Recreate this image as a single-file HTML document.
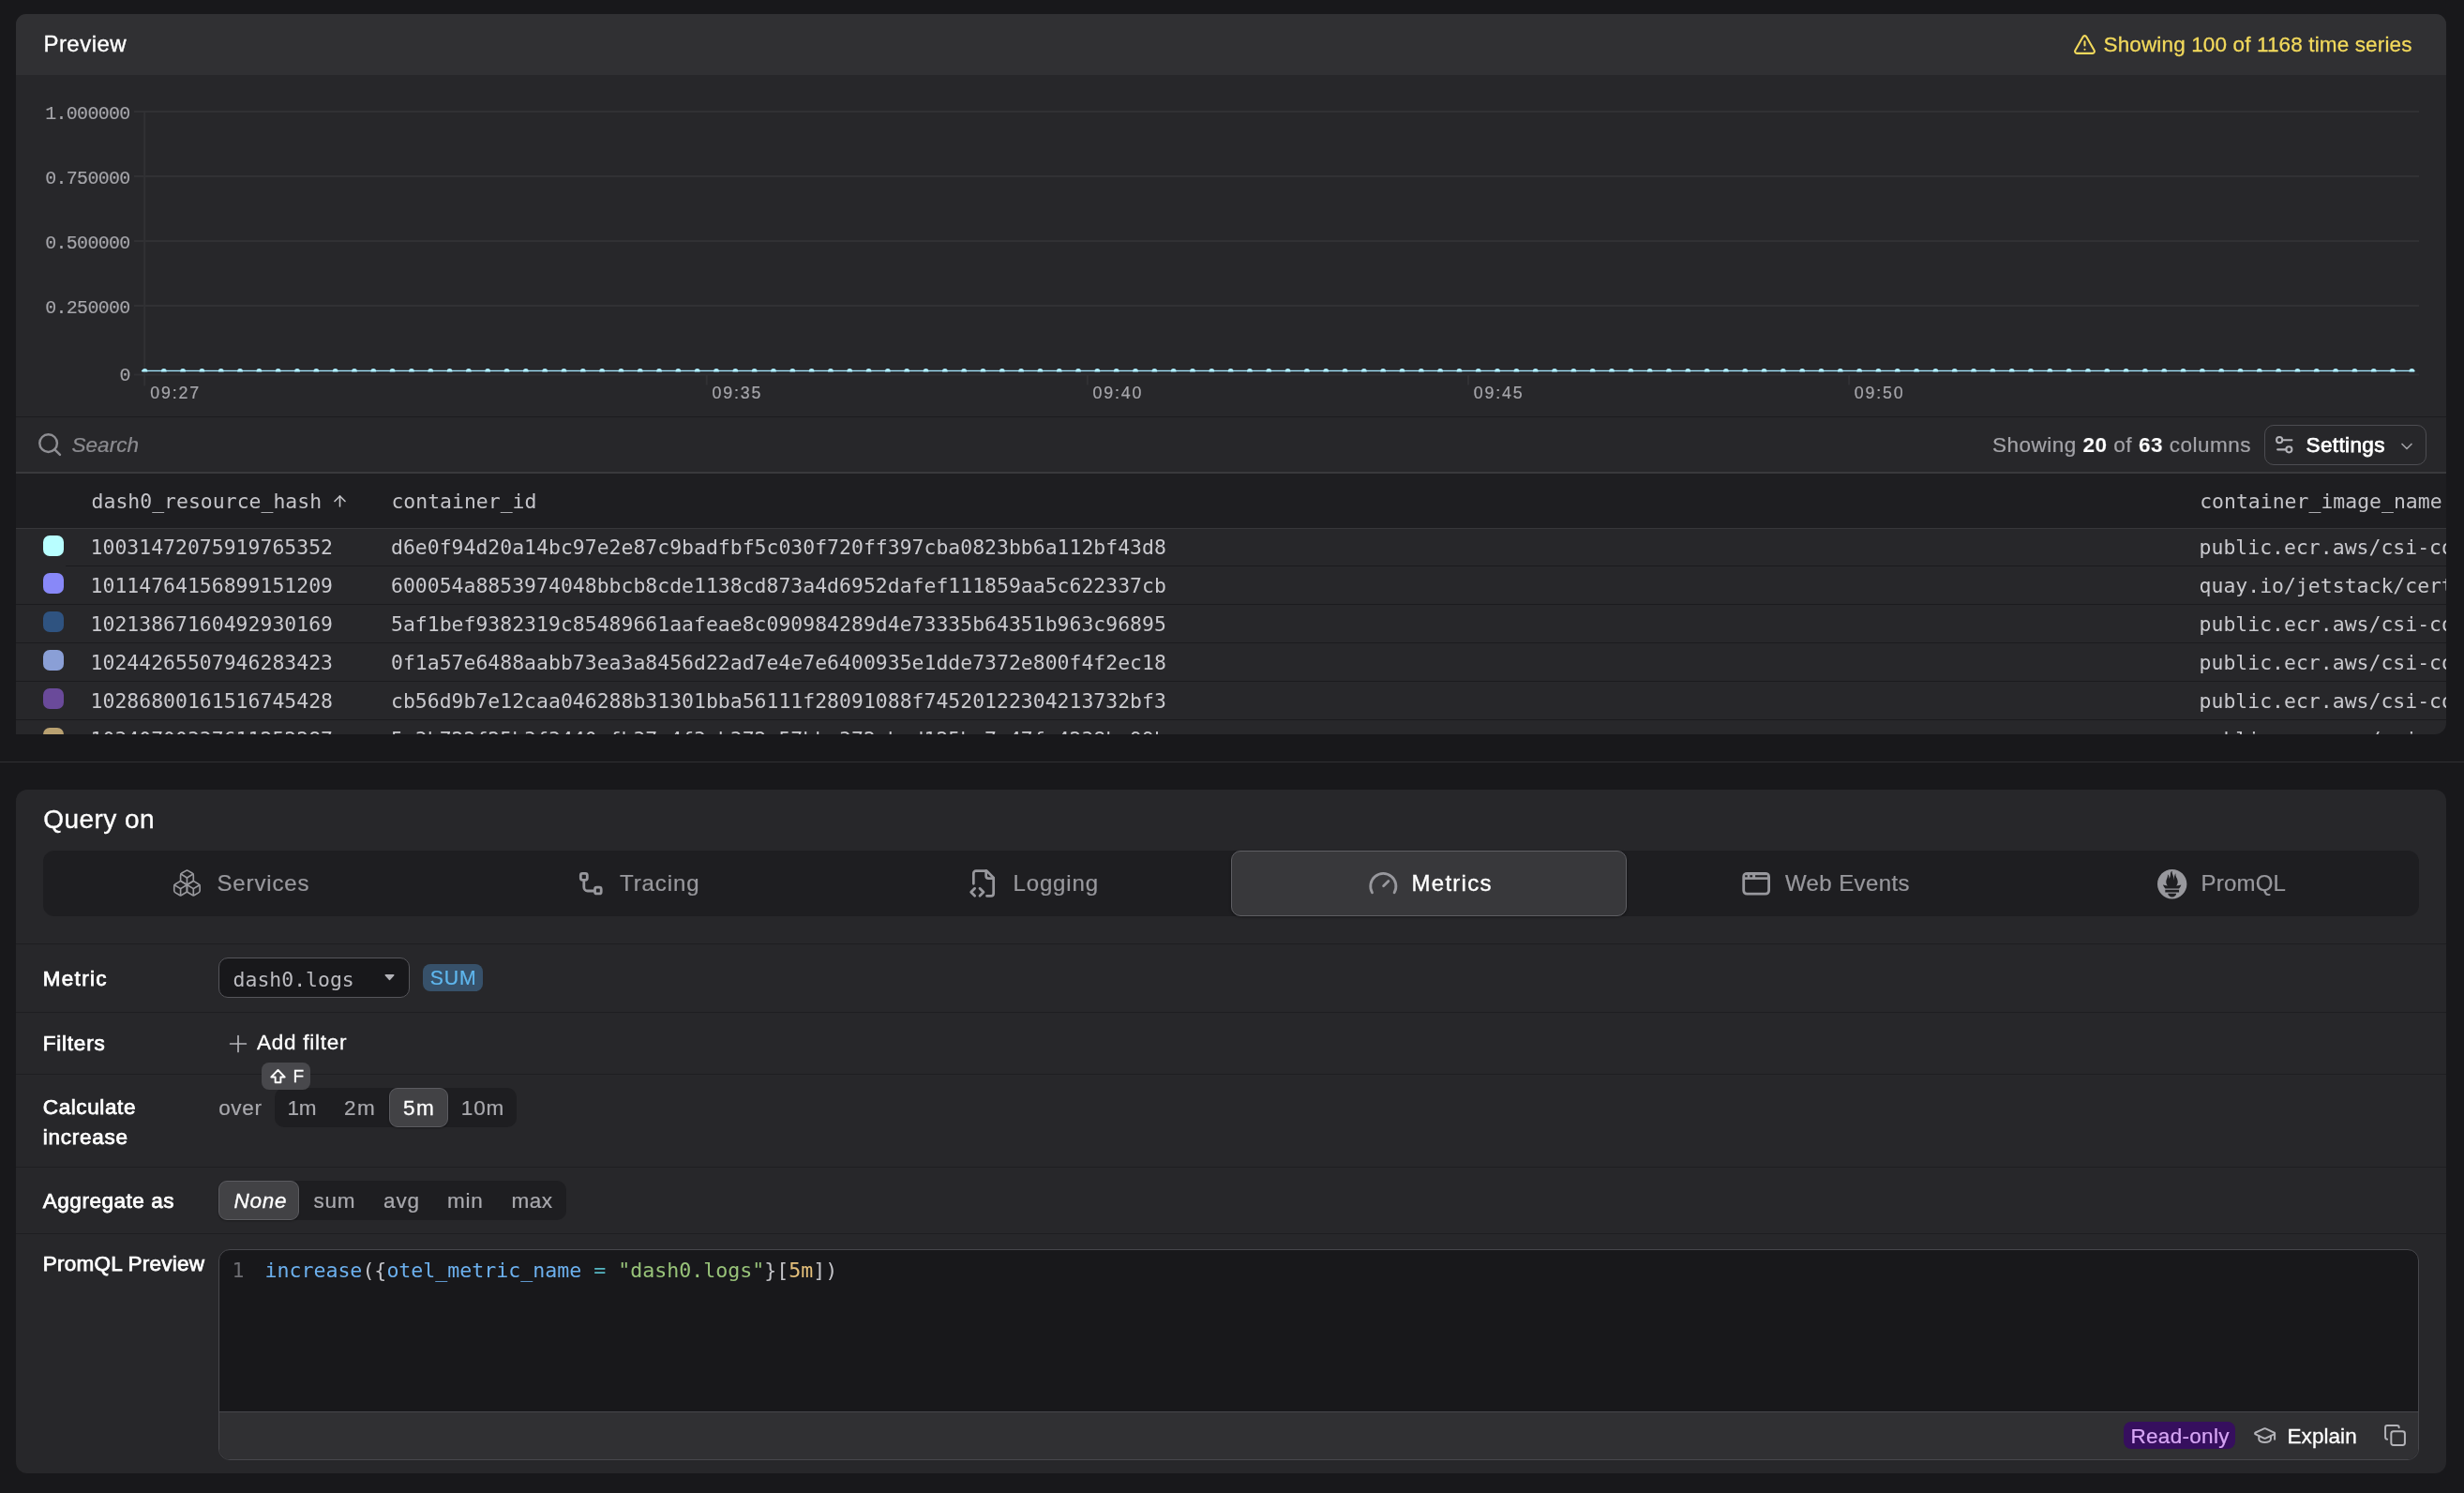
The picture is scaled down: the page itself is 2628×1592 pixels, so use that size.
<!DOCTYPE html>
<html lang="en"><head><meta charset="utf-8"><title>Preview</title>
<style>
html,body{margin:0;padding:0;}
body{width:2628px;height:1592px;background:#18181b;position:relative;overflow:hidden;font-family:"Liberation Sans",Arial,sans-serif;}
.a{position:absolute;box-sizing:border-box;}
.t{position:absolute;white-space:nowrap;line-height:1;margin:0;padding:0;}
.t b{color:#fff;font-weight:700;}
.sans{font-family:"Liberation Sans",Arial,sans-serif;}
.mono{font-family:"DejaVu Sans Mono","Liberation Mono",monospace;}
.lmono{font-family:"Liberation Mono","DejaVu Sans Mono",monospace;}
#app{position:absolute;left:0;top:0;width:2628px;height:1592px;overflow:hidden;will-change:transform;}
svg{position:absolute;overflow:visible;}
.ic{fill:none;stroke-linecap:round;stroke-linejoin:round;}
.card{background:#27272a;}
.sep{left:17px;width:2592px;height:1px;background:#1e1e21;}
.rowb{left:17px;width:2592px;height:1px;background:#1b1b1e;}
.sw{width:22.3px;height:22px;border-radius:7px;}
.seg{background:#1e1e21;border-radius:10px;}
.segon{background:#424245;border:1px solid #5b5b60;border-radius:9px;box-shadow:0 1px 2px rgba(0,0,0,.35);}

</style></head>
<body>
<div id="app">
<!-- ===== Preview card ===== -->
<div class="a card" style="left:17px;top:15px;width:2592px;height:768px;border-radius:11px 11px 12px 0;"></div>
<div class="a" style="left:17px;top:15px;width:2592px;height:65px;background:#303033;border-radius:11px 11px 0 0;"></div>
<svg class="ic" style="left:2211px;top:34.800px;" width="25" height="25" viewBox="0 0 24 24" stroke="#f2d95c" stroke-width="2"><path d="m21.73 18-8-14a2 2 0 0 0-3.48 0l-8 14A2 2 0 0 0 4 21h16a2 2 0 0 0 1.73-3"/><path d="M12 9v4"/><path d="M12 17h.01"/></svg>

<!-- chart -->
<svg style="left:0;top:0;" width="2628" height="460" viewBox="0 0 2628 460">
  <g stroke="#313134" stroke-width="2" fill="none">
    <path d="M143 119H2580M143 188H2580M143 257H2580M143 326H2580"/>
    <path d="M143 399.500H2580" stroke="#2f2f32"/>
    <path d="M154.200 120V411.500M753.800 400V410.500M1159.900 400V410.500M1566 400V410.500M1972.100 400V410.500"/>
  </g>
  <svg x="150" y="380" width="2430" height="16.500" viewBox="150 380 2430 16.500" style="overflow:hidden;">
    <path d="M150.900 396H2575.500" stroke="#1a1a1d" stroke-width="3" fill="none"/>
    <path d="M150.900 395.500H2575.500" stroke="#a6e7fe" stroke-width="1.600" fill="none"/>
    <path d="M154.450 395.800H2572.800" stroke="#aeeeff" stroke-width="5.800" stroke-linecap="round" stroke-dasharray="0.01 20.3085" fill="none"/>
  </svg>
</svg>
<div class="a" style="left:17px;top:444px;width:2592px;height:1px;background:#1b1b1e;"></div>

<!-- search / toolbar -->
<svg class="ic" style="left:39.4px;top:460.4px;" width="28" height="28" viewBox="0 0 24 24" stroke="#8e8e93" stroke-width="2.100"><circle cx="10.800" cy="10.800" r="8"/><path d="m21.4 21.4-4.8-4.8"/></svg>
<div class="a" style="left:2415px;top:453px;width:173px;height:42.5px;border:1px solid #4d4d52;border-radius:10px;"></div>
<svg class="ic" style="left:2423.500px;top:462.300px;" width="24.500" height="24.500" viewBox="0 0 24 24" stroke="#b4b4b9" stroke-width="2"><path d="M20 7h-9"/><path d="M14 17H5"/><circle cx="17" cy="17" r="3"/><circle cx="7" cy="7" r="3"/></svg>
<svg class="ic" style="left:2556.6px;top:465.5px;" width="20" height="20" viewBox="0 0 24 24" stroke="#a1a1a6" stroke-width="2"><path d="m6 9 6 6 6-6"/></svg>
<div class="a" style="left:17px;top:503px;width:2592px;height:2px;background:#39393c;"></div>

<!-- table -->
<div class="a" style="left:17px;top:505px;width:2592px;height:58px;background:#1e1e21;"></div>
<div class="a" style="left:17px;top:563px;width:2592px;height:1px;background:#37373a;"></div>
<svg class="ic" style="left:352.5px;top:524.5px;" width="19" height="19" viewBox="0 0 24 24" stroke="#c4c4c9" stroke-width="2"><path d="m5 12 7-7 7 7"/><path d="M12 19V5"/></svg>
<div class="a" style="left:17px;top:505px;width:2592px;height:278px;overflow:hidden;border-radius:0 0 12px 0;">
<div class="a rowb" style="top:98.4px;left:53px;width:2539px;"></div>
<div class="a rowb" style="top:139.3px;left:0;"></div>
<div class="a rowb" style="top:180.2px;left:0;"></div>
<div class="a rowb" style="top:221.2px;left:0;"></div>
<div class="a rowb" style="top:262.2px;left:0;"></div>
<div class="a sw" style="left:29px;top:65.5px;background:#b8feff;"></div>
<div class="a sw" style="left:29px;top:106.2px;background:#8888f8;"></div>
<div class="a sw" style="left:29px;top:147.1px;background:#2f5380;"></div>
<div class="a sw" style="left:29px;top:188.0px;background:#8a9fd6;"></div>
<div class="a sw" style="left:29px;top:229.0px;background:#6a4a9a;"></div>
<div class="a sw" style="left:29px;top:270.6px;background:#b9a171;"></div>
<div id="t46" class="t mono" style="left:79.60px;top:68.07px;font-size:21.43px;color:#c9c9ce;letter-spacing:0.022px;">10031472075919765352</div>
<div id="t47" class="t mono" style="left:400.00px;top:68.07px;font-size:21.43px;color:#c9c9ce;letter-spacing:0.023px;">d6e0f94d20a14bc97e2e87c9badfbf5c030f720ff397cba0823bb6a112bf43d8</div>
<div id="t48" class="t mono" style="left:2328.60px;top:68.07px;font-size:21.43px;color:#c9c9ce;letter-spacing:0.023px;">public.ecr.aws/csi-components/csi-node-driver-registrar</div>
<div id="t49" class="t mono" style="left:79.60px;top:109.07px;font-size:21.43px;color:#c9c9ce;letter-spacing:0.022px;">10114764156899151209</div>
<div id="t50" class="t mono" style="left:400.00px;top:109.07px;font-size:21.43px;color:#c9c9ce;letter-spacing:0.023px;">600054a8853974048bbcb8cde1138cd873a4d6952dafef111859aa5c622337cb</div>
<div id="t51" class="t mono" style="left:2328.60px;top:109.07px;font-size:21.43px;color:#c9c9ce;letter-spacing:0.023px;">quay.io/jetstack/cert-manager-controller</div>
<div id="t52" class="t mono" style="left:79.60px;top:150.07px;font-size:21.43px;color:#c9c9ce;letter-spacing:0.022px;">10213867160492930169</div>
<div id="t53" class="t mono" style="left:400.00px;top:150.07px;font-size:21.43px;color:#c9c9ce;letter-spacing:0.023px;">5af1bef9382319c85489661aafeae8c090984289d4e73335b64351b963c96895</div>
<div id="t54" class="t mono" style="left:2328.60px;top:150.07px;font-size:21.43px;color:#c9c9ce;letter-spacing:0.023px;">public.ecr.aws/csi-components/livenessprobe</div>
<div id="t55" class="t mono" style="left:79.60px;top:191.07px;font-size:21.43px;color:#c9c9ce;letter-spacing:0.022px;">10244265507946283423</div>
<div id="t56" class="t mono" style="left:400.00px;top:191.07px;font-size:21.43px;color:#c9c9ce;letter-spacing:0.023px;">0f1a57e6488aabb73ea3a8456d22ad7e4e7e6400935e1dde7372e800f4f2ec18</div>
<div id="t57" class="t mono" style="left:2328.60px;top:191.07px;font-size:21.43px;color:#c9c9ce;letter-spacing:0.023px;">public.ecr.aws/csi-components/csi-node-driver-registrar</div>
<div id="t58" class="t mono" style="left:79.60px;top:232.07px;font-size:21.43px;color:#c9c9ce;letter-spacing:0.022px;">10286800161516745428</div>
<div id="t59" class="t mono" style="left:400.00px;top:232.07px;font-size:21.43px;color:#c9c9ce;letter-spacing:0.023px;">cb56d9b7e12caa046288b31301bba56111f28091088f74520122304213732bf3</div>
<div id="t60" class="t mono" style="left:2328.60px;top:232.07px;font-size:21.43px;color:#c9c9ce;letter-spacing:0.023px;">public.ecr.aws/csi-components/livenessprobe</div>
<div id="t61" class="t mono" style="left:79.60px;top:273.07px;font-size:21.43px;color:#c9c9ce;letter-spacing:0.022px;">10340700337611252287</div>
<div id="t62" class="t mono" style="left:400.00px;top:273.07px;font-size:21.43px;color:#c9c9ce;letter-spacing:0.023px;">5e3b722f25b3f3440efb37e4f3eb372e57bbc372ebed125be7e47fe4238be99b</div>
<div id="t63" class="t mono" style="left:2328.60px;top:273.07px;font-size:21.43px;color:#c9c9ce;letter-spacing:0.023px;">public.ecr.aws/csi-components/csi-provisioner</div>
</div>
<div class="a" style="left:0;top:812px;width:2628px;height:1px;background:#303033;"></div>

<!-- ===== Query card ===== -->
<div class="a card" style="left:17px;top:842px;width:2592px;height:729px;border-radius:12px;"></div>
<div class="a" style="left:46px;top:907px;width:2534px;height:70px;background:#1e1e21;border-radius:12px;"></div>
<div class="a" style="left:1313.4px;top:907px;width:422px;height:69.6px;background:#38383b;border:1px solid #5e5e63;border-radius:10px;box-shadow:0 1px 3px rgba(0,0,0,.4);"></div>


<!-- tab icons -->
<svg class="ic" style="left:183.400px;top:924.500px;" width="32.900" height="32.900" viewBox="0 0 24 24" stroke="#98989d" stroke-width="1.2"><path d="M2.97 12.92A2 2 0 0 0 2 14.63v3.24a2 2 0 0 0 .97 1.71l3 1.8a2 2 0 0 0 2.06 0L12 19v-5.500l-5-3-4.030 2.420Z"/><path d="m7 16.500-4.740-2.850"/><path d="m7 16.500 5-3"/><path d="M7 16.500v5.170"/><path d="M12 13.500V19l3.970 2.380a2 2 0 0 0 2.060 0l3-1.800a2 2 0 0 0 .97-1.710v-3.240a2 2 0 0 0-.97-1.710L17 10.500l-5 3Z"/><path d="m17 16.500-5-3"/><path d="m17 16.500 4.740-2.850"/><path d="M17 16.500v5.170"/><path d="M7.970 4.420A2 2 0 0 0 7 6.130v4.370l5 3 5-3V6.130a2 2 0 0 0-.97-1.710l-3-1.800a2 2 0 0 0-2.060 0l-3 1.800Z"/><path d="M12 8 7.260 5.150"/><path d="m12 8 4.740-2.850"/><path d="M12 13.500V8"/></svg>
<svg class="ic" style="left:0;top:0;" width="2628" height="1592" viewBox="0 0 2628 1592" stroke="#98989d" stroke-width="2.8"><rect x="619.3" y="931.3" width="7" height="7" rx="2"/><path d="M622.8 939.8V946a4 4 0 0 0 4 4H633.4"/><rect x="634.5" y="946.2" width="6.700" height="6.700" rx="2"/></svg>
<svg class="ic" style="left:1032.9px;top:925.6px;" width="32" height="32" viewBox="0 0 24 24" stroke="#98989d" stroke-width="2.05"><path d="M4 12.200V4a2 2 0 0 1 2-2h8.600L20 7.400V20a2 2 0 0 1-2 2h-3.400"/><path d="M14 2v4a2 2 0 0 0 2 2h4"/><path d="m5 16-3 3 3 3"/><path d="m9 22 3-3-3-3"/></svg>
<svg class="ic" style="left:1458.7px;top:925.7px;" width="32.64" height="32.64" viewBox="0 0 24 24" stroke="#98989d" stroke-width="2.05"><path d="m12.200 13.800 3.900-3.900"/><path d="M3.340 19a10 10 0 1 1 17.320 0"/></svg>
<svg style="left:0;top:0;" width="2628" height="1592" viewBox="0 0 2628 1592"><rect x="1859.700" y="931.3" width="26.900" height="21.900" rx="3.600" fill="none" stroke="#98989d" stroke-width="2.8"/><rect x="1860" y="931.5" width="26.300" height="6.400" fill="#98989d"/><rect x="1861.200" y="933.2" width="2.500" height="2.100" fill="#1e1e21"/><rect x="1866.300" y="933.2" width="2.800" height="2.100" fill="#1e1e21"/><rect x="1872.100" y="933.2" width="12.800" height="2.100" fill="#1e1e21"/></svg>
<svg style="left:2300.800px;top:926.7px;" width="31.400" height="31.400" viewBox="0 0 24 24"><path fill="#98989d" d="M12 0C5.373 0 0 5.372 0 12c0 6.627 5.373 12 12 12s12-5.373 12-12c0-6.628-5.373-12-12-12zm0 22.460c-1.885 0-3.414-1.260-3.414-2.814h6.828c0 1.553-1.528 2.813-3.414 2.813zm5.640-3.745H6.360v-2.046h11.280v2.046zm-.04-3.098H6.391c-.037-.043-.075-.086-.111-.130-1.155-1.401-1.427-2.133-1.690-2.879-.005-.025 1.400.287 2.395.511 0 0 .513.119 1.262.255-.72-.843-1.147-1.915-1.147-3.010 0-2.406 1.845-4.508 1.180-6.207.648.053 1.340 1.367 1.387 3.422.689-.951.977-2.690.977-3.755 0-1.103.727-2.385 1.454-2.429-.648 1.069.168 1.984.894 4.256.272.854.237 2.290.447 3.201.07-1.892.395-4.652 1.595-5.605-.529 1.200.079 2.702.494 3.424.671 1.164 1.078 2.047 1.078 3.716 0 1.119-.413 2.172-1.110 2.996.792-.149 1.340-.283 1.340-.283l2.573-.502s-.374 1.537-1.810 3.019z"/></svg>
<div class="a sep" style="top:1006px;"></div>
<div class="a sep" style="top:1079px;"></div>
<div class="a sep" style="top:1145px;"></div>
<div class="a sep" style="top:1244px;"></div>
<div class="a sep" style="top:1315px;"></div>

<!-- metric select -->
<div class="a" style="left:233px;top:1021px;width:204px;height:42.6px;background:#18181b;border:1px solid #55555a;border-radius:10px;"></div>
<svg style="left:410px;top:1039.400px;" width="11" height="7" viewBox="0 0 11 7"><path d="M1.200 0.800H9.800L5.500 5.600Z" fill="#b2b2b7" stroke="#b2b2b7" stroke-width="1.400" stroke-linejoin="round"/></svg>
<div class="a" style="left:451px;top:1028px;width:64px;height:28.8px;background:#37516a;border-radius:8px;"></div>

<!-- filters -->
<svg class="ic" style="left:241.5px;top:1100.7px;" width="24" height="24" viewBox="0 0 24 24" stroke="#b4b4b9" stroke-width="1.7"><path d="M3.6 12h16.8"/><path d="M12 3.6v16.8"/></svg>

<!-- calculate -->
<div class="a seg" style="left:293px;top:1160.3px;width:257.6px;height:41.5px;"></div>
<div class="a segon" style="left:415px;top:1160.3px;width:63px;height:41.5px;"></div>
<!-- tooltip -->
<div class="a" style="left:279.2px;top:1132.5px;width:52px;height:29px;background:#48484c;border-radius:8px;"></div>
<svg class="ic" style="left:285.4px;top:1136.2px;" width="23" height="23" viewBox="0 0 24 24" stroke="#fff" stroke-width="2"><path d="M9 19v-6H4.5L12 5.2 19.500 13H15v6H9z"/></svg>

<!-- aggregate -->
<div class="a seg" style="left:233.2px;top:1259.2px;width:370.7px;height:41.4px;"></div>
<div class="a segon" style="left:233.2px;top:1259.2px;width:86px;height:41.4px;"></div>

<!-- editor -->
<div class="a" style="left:233.2px;top:1332.4px;width:2346.8px;height:224.2px;background:#18181b;border:1px solid #47474c;border-radius:12px;overflow:hidden;">
  <div class="a" style="left:0;top:171.8px;width:2346px;height:52px;background:#303033;border-top:1px solid #47474c;"></div>
</div>
<div class="a" style="left:2265px;top:1516px;width:119px;height:28.8px;background:#360f5e;border-radius:8px;"></div>
<svg class="ic" style="left:2403px;top:1518px;" width="25.200" height="25.200" viewBox="0 0 24 24" stroke="#b4b4b9" stroke-width="1.9"><path d="M21.42 10.922a1 1 0 0 0-.019-1.838L12.83 5.18a2 2 0 0 0-1.66 0L2.6 9.08a1 1 0 0 0 0 1.832l8.57 3.908a2 2 0 0 0 1.66 0z"/><path d="M22 10v6"/><path d="M6 12.5V16a6 3 0 0 0 12 0v-3.500"/></svg>
<svg class="ic" style="left:2542px;top:1518.200px;" width="25" height="25" viewBox="0 0 24 24" stroke="#b4b4b9" stroke-width="1.9"><rect width="14" height="14" x="8" y="8" rx="2.4" ry="2.4"/><path d="M4 16c-1.100 0-2-.9-2-2V4c0-1.100.9-2 2-2h10c1.100 0 2 .9 2 2"/></svg>

<!-- text layer -->
<div id="t0" class="t sans" style="left:46.40px;top:34.90px;font-size:24px;color:#fff;letter-spacing:0.487px;-webkit-text-stroke:0.35px #fff;">Preview</div>
<div id="t1" class="t sans" style="left:2243.50px;top:36.97px;font-size:22.5px;color:#f2d95c;letter-spacing:0.139px;-webkit-text-stroke:0.3px #f2d95c;">Showing 100 of 1168 time series</div>
<div id="t2" class="t sans" style="left:160.20px;top:411.14px;font-size:17.8px;color:#a6a6ab;letter-spacing:1.839px;-webkit-text-stroke:0.22px #a6a6ab;">09:27</div>
<div id="t3" class="t sans" style="left:759.50px;top:411.14px;font-size:17.8px;color:#a6a6ab;letter-spacing:1.839px;-webkit-text-stroke:0.22px #a6a6ab;">09:35</div>
<div id="t4" class="t sans" style="left:1165.60px;top:411.14px;font-size:17.8px;color:#a6a6ab;letter-spacing:1.839px;-webkit-text-stroke:0.22px #a6a6ab;">09:40</div>
<div id="t5" class="t sans" style="left:1571.70px;top:411.14px;font-size:17.8px;color:#a6a6ab;letter-spacing:1.839px;-webkit-text-stroke:0.22px #a6a6ab;">09:45</div>
<div id="t6" class="t sans" style="left:1977.80px;top:411.14px;font-size:17.8px;color:#a6a6ab;letter-spacing:1.839px;-webkit-text-stroke:0.22px #a6a6ab;">09:50</div>
<div id="t7" class="t sans" style="left:76.50px;top:463.56px;font-size:22.5px;color:#8b8b90;font-style:italic;letter-spacing:0.031px;-webkit-text-stroke:0.22px #8b8b90;">Search</div>
<div id="t8" class="t sans" style="left:2125.00px;top:464.26px;font-size:22.5px;color:#a3a3a8;letter-spacing:0.500px;-webkit-text-stroke:0.22px #a3a3a8;">Showing <b>20</b> of <b>63</b> columns</div>
<div id="t9" class="t sans" style="left:2459.50px;top:464.26px;font-size:22.5px;color:#fff;letter-spacing:0.377px;-webkit-text-stroke:0.75px #fff;">Settings</div>
<div id="t10" class="t sans" style="left:46.20px;top:859.81px;font-size:28px;color:#fff;letter-spacing:0.455px;-webkit-text-stroke:0.35px #fff;">Query on</div>
<div id="t11" class="t sans" style="left:231.50px;top:929.70px;font-size:24px;color:#98989d;letter-spacing:0.850px;-webkit-text-stroke:0.22px #98989d;">Services</div>
<div id="t12" class="t sans" style="left:661.00px;top:929.70px;font-size:24px;color:#98989d;letter-spacing:0.890px;-webkit-text-stroke:0.22px #98989d;">Tracing</div>
<div id="t13" class="t sans" style="left:1080.50px;top:929.70px;font-size:24px;color:#98989d;letter-spacing:0.843px;-webkit-text-stroke:0.22px #98989d;">Logging</div>
<div id="t14" class="t sans" style="left:1505.50px;top:929.70px;font-size:24px;color:#fff;letter-spacing:1.273px;-webkit-text-stroke:0.35px #fff;">Metrics</div>
<div id="t15" class="t sans" style="left:1904.00px;top:929.70px;font-size:24px;color:#98989d;letter-spacing:0.392px;-webkit-text-stroke:0.22px #98989d;">Web Events</div>
<div id="t16" class="t sans" style="left:2347.60px;top:929.70px;font-size:24px;color:#98989d;letter-spacing:0.204px;-webkit-text-stroke:0.22px #98989d;">PromQL</div>
<div id="t17" class="t sans" style="left:45.80px;top:1032.56px;font-size:22.5px;color:#fff;letter-spacing:1.280px;-webkit-text-stroke:0.75px #fff;">Metric</div>
<div id="t18" class="t sans" style="left:45.80px;top:1101.56px;font-size:22.5px;color:#fff;letter-spacing:0.767px;-webkit-text-stroke:0.75px #fff;">Filters</div>
<div id="t19" class="t sans" style="left:45.80px;top:1170.36px;font-size:22.5px;color:#fff;letter-spacing:0.605px;-webkit-text-stroke:0.75px #fff;">Calculate</div>
<div id="t20" class="t sans" style="left:45.80px;top:1202.36px;font-size:22.5px;color:#fff;letter-spacing:0.729px;-webkit-text-stroke:0.75px #fff;">increase</div>
<div id="t21" class="t sans" style="left:45.80px;top:1269.86px;font-size:22.5px;color:#fff;letter-spacing:0.526px;-webkit-text-stroke:0.75px #fff;">Aggregate as</div>
<div id="t22" class="t sans" style="left:45.80px;top:1336.56px;font-size:22.5px;color:#fff;letter-spacing:0.225px;-webkit-text-stroke:0.75px #fff;">PromQL Preview</div>
<div id="t23" class="t sans" style="left:458.80px;top:1031.86px;font-size:21.2px;color:#5fb7ee;letter-spacing:0.865px;-webkit-text-stroke:0.22px #5fb7ee;">SUM</div>
<div id="t24" class="t sans" style="left:274.00px;top:1101.46px;font-size:22.5px;color:#fff;letter-spacing:0.739px;-webkit-text-stroke:0.3px #fff;">Add filter</div>
<div id="t25" class="t sans" style="left:312.50px;top:1137.73px;font-size:19px;color:#fff;letter-spacing:0.000px;-webkit-text-stroke:0.3px #fff;">F</div>
<div id="t26" class="t sans" style="left:233.20px;top:1170.66px;font-size:22.5px;color:#a9a9ae;letter-spacing:0.656px;-webkit-text-stroke:0.22px #a9a9ae;">over</div>
<div id="t27" class="t sans" style="left:306.50px;top:1170.66px;font-size:22.5px;color:#a9a9ae;letter-spacing:-0.200px;-webkit-text-stroke:0.22px #a9a9ae;">1m</div>
<div id="t28" class="t sans" style="left:367.00px;top:1170.66px;font-size:22.5px;color:#a9a9ae;letter-spacing:1.384px;-webkit-text-stroke:0.22px #a9a9ae;">2m</div>
<div id="t29" class="t sans" style="left:430.10px;top:1170.66px;font-size:22.5px;color:#fff;letter-spacing:1.384px;-webkit-text-stroke:0.3px #fff;">5m</div>
<div id="t30" class="t sans" style="left:491.80px;top:1170.66px;font-size:22.5px;color:#a9a9ae;letter-spacing:0.900px;-webkit-text-stroke:0.22px #a9a9ae;">10m</div>
<div id="t31" class="t sans" style="left:249.40px;top:1270.06px;font-size:22.5px;color:#fff;font-style:italic;letter-spacing:0.751px;-webkit-text-stroke:0.3px #fff;">None</div>
<div id="t32" class="t sans" style="left:334.50px;top:1270.06px;font-size:22.5px;color:#a9a9ae;letter-spacing:0.717px;-webkit-text-stroke:0.22px #a9a9ae;">sum</div>
<div id="t33" class="t sans" style="left:409.10px;top:1270.06px;font-size:22.5px;color:#a9a9ae;letter-spacing:0.784px;-webkit-text-stroke:0.22px #a9a9ae;">avg</div>
<div id="t34" class="t sans" style="left:476.90px;top:1270.06px;font-size:22.5px;color:#a9a9ae;letter-spacing:0.792px;-webkit-text-stroke:0.22px #a9a9ae;">min</div>
<div id="t35" class="t sans" style="left:545.50px;top:1270.06px;font-size:22.5px;color:#a9a9ae;letter-spacing:0.467px;-webkit-text-stroke:0.22px #a9a9ae;">max</div>
<div id="t36" class="t sans" style="left:2272.50px;top:1520.96px;font-size:22.5px;color:#d7a6f5;letter-spacing:0.298px;-webkit-text-stroke:0.22px #d7a6f5;">Read-only</div>
<div id="t37" class="t sans" style="left:2439.50px;top:1520.96px;font-size:22.5px;color:#fff;letter-spacing:0.059px;-webkit-text-stroke:0.3px #fff;">Explain</div>
<div id="t38" class="t lmono" style="left:48.14px;top:112.26px;font-size:19.9px;color:#a6a6ab;letter-spacing:-0.617px;-webkit-text-stroke:0.15px #a6a6ab;">1.000000</div>
<div id="t39" class="t lmono" style="left:48.14px;top:181.26px;font-size:19.9px;color:#a6a6ab;letter-spacing:-0.617px;-webkit-text-stroke:0.15px #a6a6ab;">0.750000</div>
<div id="t40" class="t lmono" style="left:48.14px;top:250.06px;font-size:19.9px;color:#a6a6ab;letter-spacing:-0.617px;-webkit-text-stroke:0.15px #a6a6ab;">0.500000</div>
<div id="t41" class="t lmono" style="left:48.14px;top:319.06px;font-size:19.9px;color:#a6a6ab;letter-spacing:-0.617px;-webkit-text-stroke:0.15px #a6a6ab;">0.250000</div>
<div id="t42" class="t lmono" style="left:127.38px;top:390.66px;font-size:19.9px;color:#a6a6ab;letter-spacing:-0.618px;-webkit-text-stroke:0.15px #a6a6ab;">0</div>
<div id="t43" class="t mono" style="left:97.60px;top:524.07px;font-size:21.43px;color:#c4c4c9;letter-spacing:0.023px;">dash0_resource_hash</div>
<div id="t44" class="t mono" style="left:417.40px;top:524.07px;font-size:21.43px;color:#c4c4c9;letter-spacing:0.023px;">container_id</div>
<div id="t45" class="t mono" style="left:2346.20px;top:524.07px;font-size:21.43px;color:#c4c4c9;letter-spacing:0.022px;">container_image_name</div>
<div id="t64" class="t mono" style="left:248.60px;top:1033.87px;font-size:21.43px;color:#bbbbc0;letter-spacing:0.022px;">dash0.logs</div>
<div id="t65" class="t mono" style="left:247.60px;top:1344.17px;font-size:21.43px;color:#6e6e73;letter-spacing:0.014px;">1</div>
<div id="t66" class="t mono" style="left:282.40px;top:1344.03px;font-size:21.6px;color:#c9c9ce;letter-spacing:-0.003px;"><span style="color:#6cb0ee">increase</span><span style="color:#c3c3c8">({</span><span style="color:#6cb0ee">otel_metric_name</span> <span style="color:#56b6c2">=</span> <span style="color:#98c379">"dash0.logs"</span><span style="color:#c3c3c8">}[</span><span style="color:#e5c07b">5m</span><span style="color:#c3c3c8">])</span></div>
</div>
</body></html>
